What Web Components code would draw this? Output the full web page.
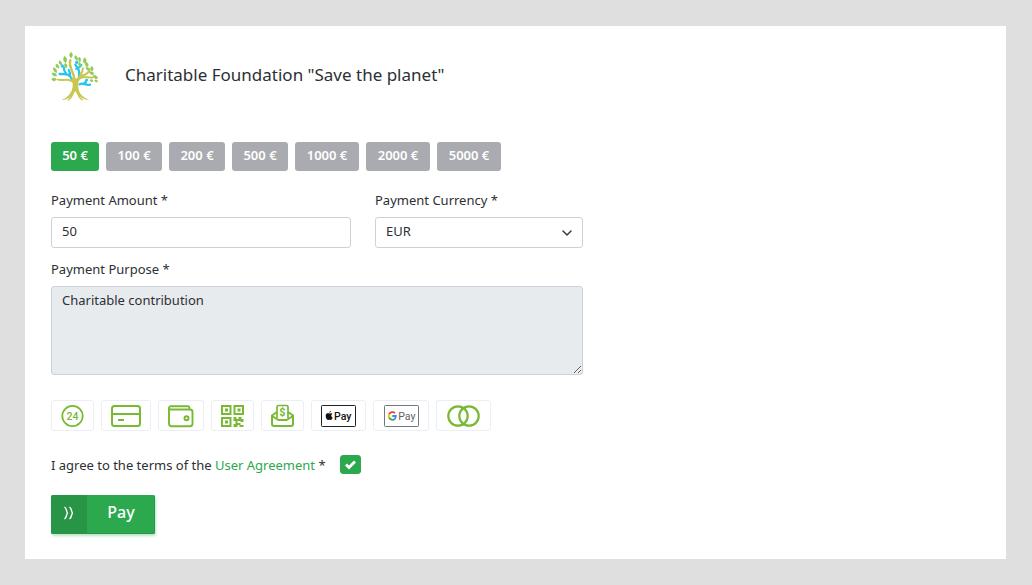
<!DOCTYPE html>
<html lang="en">
<head>
<meta charset="utf-8">
<meta name="viewport" content="width=device-width, initial-scale=1">
<title>Charitable Foundation</title>
<style>
  body { margin: 0; background: #dfdfdf; color: #2c3034; font: 13px/20px "Noto Sans", "Open Sans", sans-serif; }
</style>
</head>
<body>
<donation-page>
  <foundation-header slot="header">Charitable Foundation "Save the planet"</foundation-header>
  <amount-picker></amount-picker>
  <payment-fields></payment-fields>
  <payment-methods></payment-methods>
  <agreement-row></agreement-row>
  <pay-button>Pay</pay-button>
</donation-page>

<script>
const define = (name, html) => customElements.define(name, class extends HTMLElement {
  constructor() {
    super();
    const root = this.attachShadow({ mode: 'open' });
    root.innerHTML = '<style>*{box-sizing:border-box}:host{display:block}</style>' + html;
  }
});

define('donation-page', `
<style>
  :host { padding: 26px 26px 26px 25px; }
  main { background: #fff; padding: 26px 26px 25px; }
</style>
<main><slot name="header"></slot><slot></slot></main>`);

define('foundation-header', `
<style>
  header { display: flex; align-items: center; gap: 26px; height: 49px; }
  svg { width: 48px; height: 49px; flex: none; }
  h1 { margin: 0; padding-bottom: 4px; font-size: 17px; line-height: 24px; font-weight: 400; }
</style>
<header>
<svg viewBox="36 36 144 147" role="img" aria-label="Tree">
  <g fill="none" stroke="#24c6f0" stroke-width="7" stroke-linecap="round">
    <path d="M98 116C88 98 82 104 62 102M84 104C76 94 74 90 75 84M93 108Q94 98 89 90M120 108C124 92 116 82 109 74M112 86Q122 84 127 75M122 133C130 126 140 138 153 134M134 131Q142 128 141 122"/>
  </g>
  <g fill="#24c6f0"><circle cx="70" cy="78" r="5"/><circle cx="113" cy="67" r="5"/><circle cx="143" cy="120" r="4"/></g>
  <g fill="none" stroke="#c9c751" stroke-linecap="round">
    <path stroke-width="7" d="M105 150C110 132 108 112 97 88Q90 74 94 60"/>
    <path stroke-width="6" d="M105 128C90 112 72 124 56 119M112 139C112 112 131 104 132 85M116 122C128 103 148 116 163 112M127 108C144 103 148 98 152 92"/>
    <path fill="#c9c751" stroke="none" d="M96 111Q108 121 120 111Q116 140 120 153Q127 171 152 181Q124 178 111 157L109 153L105 159Q94 179 66 181Q98 167 101 140Q102 121 96 111Z"/>
    <path stroke-width="4" d="M105 150Q100 173 88 180M113 150Q118 173 130 180"/>
  </g>
  <g fill="#91c858" stroke="#91c858" stroke-width="2" stroke-linejoin="round">
    <path d="M96 37Q104 43 97 53Q87 49 96 37ZM76 49Q88 56 80 68Q70 62 76 49ZM61 62Q71 66 67 76Q57 70 61 62ZM51 73Q62 74 59 85Q48 82 51 73ZM78 70Q88 74 82 84Q73 80 78 70ZM43 83Q55 86 53 98Q42 94 43 83ZM39 99Q52 97 53 107Q42 111 39 99ZM38 117Q46 111 52 118Q45 128 38 117ZM108 47Q118 50 115 61Q105 58 108 47ZM121 51Q128 57 123 66Q115 60 121 51ZM137 53Q146 60 138 70Q128 65 137 53ZM120 67Q128 71 125 81Q116 77 120 67ZM140 67Q151 69 146 80Q137 80 140 67ZM140 83Q150 80 153 89Q145 95 140 83ZM158 79Q166 84 160 93Q150 88 158 79ZM151 96Q162 93 165 101Q157 109 151 96ZM164 106Q173 105 176 114Q166 120 164 106ZM153 121Q158 116 162 122Q158 130 153 121ZM167 121Q173 117 176 124Q170 130 167 121Z"/>
  </g>
</svg>
<h1><slot></slot></h1>
</header>`);

define('amount-picker', `
<style>
  :host { margin-top: 41px; }
  div { display: flex; flex-wrap: wrap; gap: 7px; }
  button { height: 29px; min-width: 56px; padding: 0 8px 3px; border: 0; border-radius: 3px; background: #a9abb0; color: #fff; font: inherit; font-weight: 600; cursor: pointer; }
  button[aria-pressed=true] { background: #2ca94f; min-width: 48px; }
  .wide { min-width: 64px; }
</style>
<div role="group" aria-label="Amount">
  <button type="button" aria-pressed="true">50 €</button><button type="button">100 €</button><button type="button">200 €</button><button type="button">500 €</button><button type="button" class="wide">1000 €</button><button type="button" class="wide">2000 €</button><button type="button" class="wide">5000 €</button>
</div>`);

define('payment-fields', `
<style>
  :host { margin-top: 19px; max-width: 532px; }
  .row { display: grid; grid-template-columns: 300fr 208fr; gap: 24px; }
  label { display: block; margin-bottom: 7px; }
  input, select, textarea { display: block; width: 100%; height: 31px; margin: 0; padding: 0 10px 3px; border: 1px solid #cdd2da; border-radius: 3px; background: #fff; color: inherit; font: inherit; outline: 0; }
  select { appearance: none; }
  .select { position: relative; }
  .select svg { position: absolute; right: 10px; top: 10px; width: 12px; height: 12px; pointer-events: none; }
  .purpose { margin-top: 11px; }
  textarea { height: 89px; padding: 3px 10px; background: #e7ebee; resize: vertical; }
</style>
<div class="row">
  <div><label for="amount">Payment Amount *</label><input id="amount" inputmode="numeric" value="50"></div>
  <div><label for="currency">Payment Currency *</label>
    <div class="select"><select id="currency"><option>EUR</option></select>
    <svg viewBox="0 0 12 12" aria-hidden="true"><path d="M2 4l4 4 4-4" fill="none" stroke="#343a40" stroke-width="1.5" stroke-linecap="round" stroke-linejoin="round"/></svg></div></div>
</div>
<div class="purpose"><label for="purpose">Payment Purpose *</label><textarea id="purpose" readonly>Charitable contribution</textarea></div>`);

define('payment-methods', `
<style>
  :host { margin-top: 25px; }
  ul { display: flex; flex-wrap: wrap; gap: 7px; margin: 0; padding: 0; list-style: none; }
  li { display: flex; align-items: center; justify-content: center; height: 31px; padding: 0 9px; border: 1px solid #e9eff4; border-radius: 3px; }
  svg { display: block; height: 24px; fill: none; stroke: #78b833; stroke-width: 2; }
  text { font-family: Roboto, sans-serif; stroke: none; }
</style>
<ul>
<li><svg width="23" viewBox="0 0 23 24"><circle cx="11.5" cy="12" r="10.2" stroke-width="1.7"/><text x="11.5" y="15.7" text-anchor="middle" font-size="10.5" font-weight="500" fill="#78b833">24</text></svg></li>
<li><svg width="30" viewBox="0 0 30 24"><rect x="1" y="2" width="28" height="20" rx="2.5"/><path d="M1 10h28M7 16h6"/></svg></li>
<li><svg width="26" viewBox="0 0 26 24"><path d="M2 2.2h18c1.1 0 1.5.8 1.500 2.600M2 2.200c-1.400 1-1 3.300 1 3.300h19c1.800 0 2.500.8 2.500 2.500v11.800c0 1.500-.8 2.400-2.500 2.400H3.500C2 22.200 1 21.300 1 19.800V3.500" stroke-width="1.900"/><circle cx="18.500" cy="14.300" r="2"/></svg></li>
<li><svg width="23" viewBox="0 0 23 24"><path d="M1 2h8.500v8H1zM13.500 2H22v8h-8.500zM1 14h8.500v8H1z"/><path fill="#78b833" stroke="none" d="M4 4.500h3v3H4zm12.500 0h3v3h-3zM4 16.500h3v3H4zM12.500 13h3v2h2v-2h3v2h2v3h-3v-1h-3v2h3v2h3v2h-4v-2h-2v2h-4v-3h2v-3h-2z"/></svg></li>
<li><svg width="23" viewBox="0 0 23 24"><path stroke-width="1.700" d="M6 14V3q0-1.500 1.500-1.500h8Q17 1.500 17 3v11"/><path d="M6 8l-5 3.500V20q0 2 2 2h17q2 0 2-2v-8.500L17 8M1 12l6.500 4h8L22 12"/><text x="11.500" y="12.300" text-anchor="middle" font-size="11" font-weight="700" fill="#78b833">$</text></svg></li>
<li><svg width="35" viewBox="0 0 35 24"><rect x=".5" y="1.500" width="34" height="21" rx=".8" stroke="#222" stroke-width="1"/><path fill="#111" stroke="none" d="M8.200 8.800q.2-1.800 1.900-2.100 0 1.700-1.900 2.100zM8.200 9.500c.8 0 2-.9 3.100.2-1.600 1-1.200 3.200.4 3.900-.6 1.500-1.300 2.600-2.200 2.400-.9-.3-1.300-.3-2.100 0-2 .5-3.700-4.700-2-6.200 1-.9 1.900-.3 2.800-.3z"/><text x="13" y="15.700" font-size="10.500" font-weight="500" fill="#111">Pay</text></svg></li>
<li><svg width="36" viewBox="0 0 36 24"><rect x="1.500" y="1.500" width="34" height="21" rx=".8" stroke="#73767d" stroke-width="1"/><g stroke-width="1.800"><path stroke="#ea4335" d="M6.100 10.200C7.500 7.900 10.100 7.500 12 9"/><path stroke="#fbbc04" d="M6.100 10.200q-.8 1.800 0 3.600"/><path stroke="#34a853" d="M6.100 13.800c1.200 2.100 3.900 2.600 5.600 1.200"/><path stroke="#4285f4" d="M9.300 12h3.500q0 1.900-1.100 3"/></g><text x="15.300" y="15.600" font-size="10.500" fill="#5f6368">Pay</text></svg></li>
<li><svg width="35" viewBox="0 0 35 24"><circle cx="12" cy="12" r="9.700" stroke-width="2.200"/><circle cx="23" cy="12" r="9.700" stroke-width="2.200"/></svg></li>
</ul>`);

define('agreement-row', `
<style>
  :host { margin-top: 24px; }
  div { display: flex; align-items: center; gap: 14px; height: 19px; }
  a { color: #2ca94f; text-decoration: none; }
  .box { position: relative; }
  input { appearance: none; display: block; width: 21px; height: 19px; margin: 0; border: 1px solid #2ca94f; border-radius: 3px; background: #fff; }
  input:checked { background: #2ca94f; }
  svg { position: absolute; inset: 4px 5px; width: 11px; height: 11px; pointer-events: none; }
</style>
<div><label for="agree">I agree to the terms of the <a href="#agreement">User Agreement</a> *</label>
<span class="box"><input id="agree" type="checkbox" checked><svg viewBox="0 0 11 11" aria-hidden="true"><path d="M1 5.500l3 3L10 2.500" fill="none" stroke="#fff" stroke-width="2.800"/></svg></span></div>`);

define('pay-button', `
<style>
  :host { margin-top: 21px; }
  button { display: flex; align-items: stretch; height: 39px; padding: 0; border: 0; border-radius: 2px; overflow: hidden; background: #2ca94f; color: #fff; box-shadow: 1px 2px 3px #2ca94f55, inset -1px -1px #27964a; font: inherit; font-size: 16px; font-weight: 500; cursor: pointer; }
  .icon { display: grid; place-items: center; width: 36px; padding-bottom: 4px; background: #289546; }
  .text { min-width: 68px; padding: 5px 20px 0; line-height: 24px; }
</style>
<button type="submit"><span class="icon"><svg width="12" height="14" viewBox="0 0 12 14" aria-hidden="true"><path d="M1.500 1Q3 2 3.500 4.500T5 7Q4 7 3.500 9.500T1.500 13M6.500 1Q8 2 8.500 4.500T10 7Q9 7 8.500 9.500T6.500 13" fill="none" stroke="#fff" stroke-width="1.400"/></svg></span><span class="text"><slot></slot></span></button>`);
</script>
</body>
</html>
